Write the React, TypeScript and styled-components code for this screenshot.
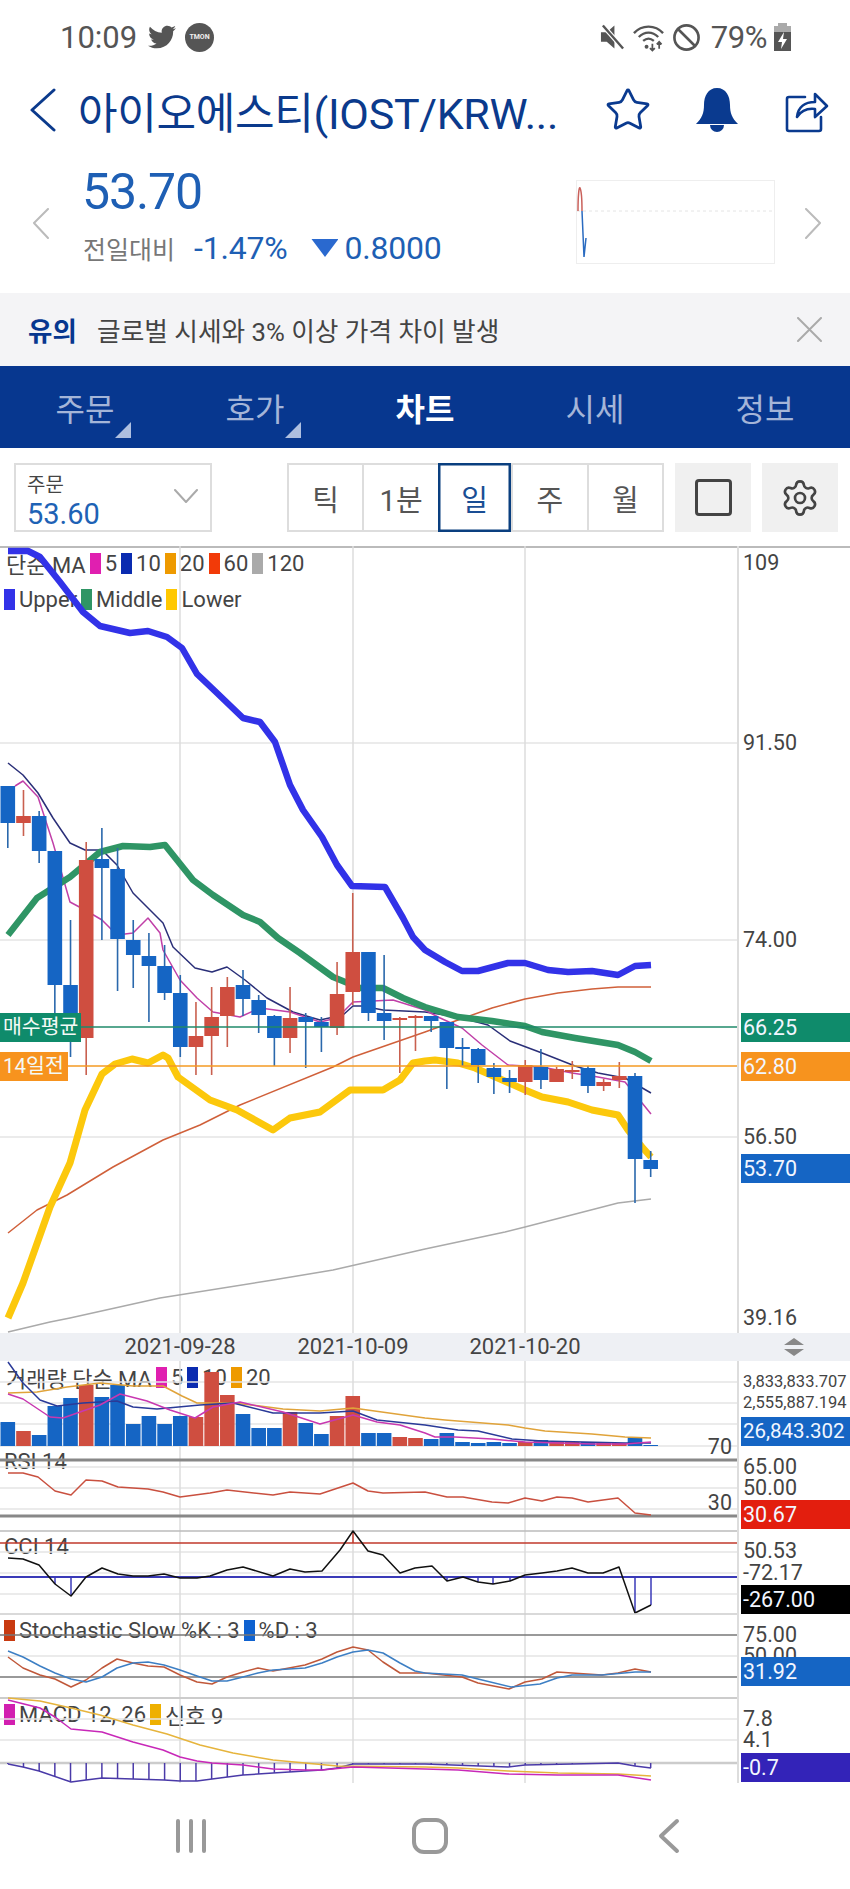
import React from "react";
import styled, { createGlobalStyle } from "styled-components";
import { FaTwitter } from "react-icons/fa";
import { Ban, Settings, Star } from "lucide-react";

type Pt = [number, number];
type Candle = ["b" | "r", number, number, number, number];

const BLUE = "#1565c4";
const RED = "#cf4e40";
const NAVY = "#07378f";
const PLOT_W = 737;
const GRID_X = [180, 353, 525];

const GlobalStyle = createGlobalStyle`
    html, body {
        margin: 0;
        padding: 0;
        background: #fff;
    }
    body {
        font-family: Roboto, "Noto Sans CJK KR", sans-serif;
        color: #444;
    }
`;

const Page = styled.div`
    width: 850px;
    height: 1889px;
    overflow: hidden;
    background: #fff;
`;

/* ---------- status bar ---------- */
const StatusBar = styled.div`
    height: 74px;
    display: flex;
    align-items: center;
    padding: 0 59px 0 60px;
    color: #555;
`;
const Time = styled.div`
    font-size: 31px;
    width: 88px;
`;
const TmonBadge = styled.div`
    width: 29px;
    height: 29px;
    margin-left: 9px;
    border-radius: 50%;
    background: #555;
    color: #eee;
    font-size: 7px;
    font-weight: 700;
    display: flex;
    align-items: center;
    justify-content: center;
`;
const StatusRight = styled.div`
    margin-left: auto;
    display: flex;
    align-items: center;
    gap: 7px;
`;
const Battery = styled.div`
    font-size: 31px;
    letter-spacing: -0.4px;
    margin-left: 3px;
`;

/* ---------- title ---------- */
const Header = styled.div`
    height: 72px;
    display: flex;
    align-items: center;
    padding-left: 30px;
    color: ${NAVY};
`;
const Title = styled.div`
    width: 526px;
    margin-left: 22px;
    font-size: 43px;
    white-space: nowrap;
    color: #0b3a8c;
    letter-spacing: -0.3px;
`;
const HeaderIcons = styled.div`
    display: flex;
    align-items: center;
`;
const HeaderIcon = styled.div<{ $w: number; $ml: number }>`
    width: ${(p) => p.$w}px;
    margin-left: ${(p) => p.$ml}px;
    display: flex;
    align-items: center;
    justify-content: center;
`;

/* ---------- price ---------- */
const PriceRow = styled.div`
    height: 147px;
    box-sizing: border-box;
    display: flex;
    align-items: flex-start;
    padding: 21px 28px 0 32px;
`;
const SideChevron = styled.div`
    margin-top: 41px;
    width: 17px;
`;
const PriceInfo = styled.div`
    flex: 1;
    margin-left: 34px;
`;
const PriceValue = styled.div`
    font-size: 50px;
    line-height: 50px;
    color: #1e5fb4;
    letter-spacing: -1.1px;
    margin-left: -1px;
`;
const ChangeRow = styled.div`
    margin-top: 13px;
    height: 36px;
    display: flex;
    align-items: center;
`;
const ChangeLabel = styled.div`
    font-size: 25px;
    color: #777;
    width: 111px;
`;
const ChangeValue = styled.div`
    font-size: 32px;
    color: #1e5fb4;
    letter-spacing: -0.2px;
`;
const DownMark = styled.div`
    width: 27px;
    height: 18px;
    margin: 0 6px 0 24px;
    background: #2a69cf;
    clip-path: polygon(0 0, 100% 0, 50% 100%);
`;
const MiniChart = styled.div`
    width: 199px;
    height: 84px;
    margin: 13px 30px 0 0;
    border: 1px solid #eee;
    box-sizing: border-box;
`;

/* ---------- notice ---------- */
const Notice = styled.div`
    height: 73px;
    background: #f4f4f6;
    display: flex;
    align-items: center;
    padding: 0 28px;
`;
const NoticeTag = styled.div`
    color: ${NAVY};
    font-weight: 700;
    font-size: 26.5px;
    width: 69px;
`;
const NoticeText = styled.div`
    flex: 1;
    color: #444;
    font-size: 25.7px;
    white-space: nowrap;
`;

/* ---------- tabs ---------- */
const Tabs = styled.div`
    height: 82px;
    background: ${NAVY};
    display: grid;
    grid-template-columns: repeat(5, 1fr);
`;
const Tab = styled.div<{ $active?: boolean }>`
    position: relative;
    display: flex;
    align-items: center;
    justify-content: center;
    font-size: 32px;
    font-weight: ${(p) => (p.$active ? 700 : 400)};
    color: ${(p) => (p.$active ? "#fff" : "#a4b5d8")};
`;
const TabCorner = styled.div`
    position: absolute;
    left: 115px;
    bottom: 10px;
    width: 16px;
    height: 16px;
    background: #aebfe0;
    clip-path: polygon(100% 0, 100% 100%, 0 100%);
`;

/* ---------- toolbar ---------- */
const Toolbar = styled.div`
    height: 98px;
    box-sizing: border-box;
    padding: 15px 12px 14px 14px;
    display: flex;
`;
const PriceSelect = styled.div`
    width: 198px;
    box-sizing: border-box;
    border: 2px solid #ddd;
    padding: 7px 0 0 11px;
    position: relative;
`;
const SelectLabel = styled.div`
    font-size: 20px;
    line-height: 26px;
    color: #444;
`;
const SelectValue = styled.div`
    font-size: 29px;
    line-height: 32px;
    color: #1e62b5;
`;
const SelectCaret = styled.div`
    position: absolute;
    right: 12px;
    top: 24px;
    display: flex;
`;
const Periods = styled.div`
    width: 377px;
    margin-left: 75px;
    display: flex;
    box-sizing: border-box;
    border: 2px solid #ddd;
`;
const Period = styled.div<{ $active?: boolean }>`
    flex: 1;
    display: flex;
    align-items: center;
    justify-content: center;
    font-size: 29px;
    color: ${(p) => (p.$active ? "#1a4e94" : "#555")};
    border-right: 2px solid #ddd;
    margin: ${(p) => (p.$active ? "-2px 0 -2px -2px" : "0")};
    box-shadow: ${(p) => (p.$active ? "inset 0 0 0 2.5px #0a3f7f" : "none")};
    &:last-child {
        border-right: 0;
    }
`;
const ToolButton = styled.div<{ $ml: number }>`
    width: 76px;
    margin-left: ${(p) => p.$ml}px;
    background: #f0f0f0;
    display: flex;
    align-items: center;
    justify-content: center;
    color: #444;
`;
const SquareGlyph = styled.div`
    width: 37px;
    height: 37px;
    box-sizing: border-box;
    border: 3px solid #444;
    border-radius: 4px;
`;

/* ---------- chart panels ---------- */
const PanelRow = styled.div<{ $h: number; $topLine?: boolean }>`
    height: ${(p) => p.$h}px;
    display: grid;
    grid-template-columns: ${PLOT_W}px 1fr;
    box-shadow: ${(p) => (p.$topLine ? "inset 0 2px 0 #bbb" : "none")};
`;
const Plot = styled.div`
    position: relative;
`;
const PlotSvg = styled.svg`
    position: relative;
    z-index: 1;
    display: block;
    overflow: visible;
`;
const Axis = styled.div`
    position: relative;
    border-left: 2px solid #ddd;
`;
const AxisLabel = styled.div<{ $y: number; $size?: number; $right?: boolean }>`
    position: absolute;
    left: ${(p) => (p.$right ? "auto" : "4px")};
    right: ${(p) => (p.$right ? "5px" : "auto")};
    top: ${(p) => p.$y}px;
    transform: translateY(-50%);
    font-size: ${(p) => p.$size ?? 21.5}px;
    line-height: 1;
    color: #444;
    white-space: nowrap;
    z-index: 1;
`;
const ValueTag = styled.div<{ $y: number; $color: string; $size?: number }>`
    position: absolute;
    left: 2px;
    right: 0;
    top: ${(p) => p.$y}px;
    height: 29px;
    background: ${(p) => p.$color};
    color: #f2f6ff;
    font-size: ${(p) => p.$size ?? 21.5}px;
    line-height: 29px;
    padding-left: 2px;
    z-index: 2;
`;
const LineTag = styled.div<{ $y: number; $color: string; $w: number }>`
    position: absolute;
    left: 0;
    top: ${(p) => p.$y}px;
    width: ${(p) => p.$w}px;
    height: 29px;
    background: ${(p) => p.$color};
    color: #f4faf6;
    font-size: 20.5px;
    line-height: 29px;
    padding-left: 3px;
    box-sizing: border-box;
    white-space: nowrap;
    z-index: 2;
`;
const Legend = styled.div<{ $y: number; $x?: number }>`
    position: absolute;
    left: ${(p) => p.$x ?? 4}px;
    top: ${(p) => p.$y}px;
    height: 22px;
    display: flex;
    align-items: center;
    gap: 4px;
    font-size: 22px;
    color: #444;
    white-space: nowrap;
`;
const Swatch = styled.span<{ $color: string }>`
    width: 11px;
    height: 21px;
    background: ${(p) => p.$color};
`;
const DateBar = styled.div`
    position: relative;
    height: 28px;
    background: #eef0f4;
`;
const DateLabel = styled.div<{ $x: number }>`
    position: absolute;
    left: ${(p) => p.$x}px;
    top: 0;
    transform: translateX(-50%);
    font-size: 22px;
    line-height: 28px;
    color: #444;
`;
const SplitHandle = styled.svg`
    position: absolute;
    left: 781px;
    top: 4px;
`;

/* ---------- nav ---------- */
const NavBar = styled.div`
    height: 106px;
    display: grid;
    grid-template-columns: repeat(3, 239px);
    padding-left: 71px;
    align-items: center;
    justify-items: center;
`;

/* ---------- data ---------- */
const candles: Candle[] = [
    ["b", 786, 786, 823, 848], ["r", 790, 816, 823, 836], ["b", 811, 816, 851, 863], ["b", 851, 851, 985, 1013],
    ["b", 920, 985, 1030, 1057], ["r", 842, 860, 1038, 1075], ["b", 828, 859, 868, 940], ["b", 848, 869, 939, 991],
    ["b", 920, 940, 955, 988], ["b", 933, 956, 966, 1022], ["b", 945, 966, 993, 1000], ["b", 975, 993, 1047, 1057],
    ["r", 1002, 1036, 1047, 1075], ["r", 987, 1017, 1036, 1075], ["r", 977, 987, 1016, 1047], ["b", 970, 985, 999, 1016],
    ["b", 995, 1000, 1015, 1033], ["b", 1015, 1016, 1038, 1066], ["r", 987, 1018, 1038, 1053], ["b", 1013, 1017, 1022, 1068],
    ["b", 1017, 1022, 1027, 1052], ["r", 962, 994, 1028, 1035], ["r", 893, 952, 992, 1005], ["b", 952, 952, 1013, 1021],
    ["b", 955, 1013, 1021, 1040], ["r", 1017, 1018, 1020, 1073], ["r", 1015, 1016, 1018, 1051], ["b", 1016, 1016, 1021, 1032],
    ["b", 1022, 1022, 1048, 1089], ["b", 1038, 1047, 1049, 1066], ["b", 1048, 1049, 1065, 1083], ["b", 1063, 1068, 1077, 1094],
    ["b", 1070, 1078, 1082, 1093], ["r", 1060, 1065, 1082, 1095], ["b", 1049, 1067, 1080, 1089], ["r", 1067, 1069, 1082, 1082],
    ["r", 1061, 1070, 1072, 1079], ["b", 1066, 1068, 1086, 1093], ["r", 1079, 1082, 1086, 1091], ["r", 1062, 1076, 1080, 1088],
    ["b", 1073, 1076, 1159, 1203], ["b", 1151, 1160, 1169, 1177],
];
const volumeTops = [
    1422, 1431, 1435, 1406, 1398, 1385, 1397, 1385, 1424, 1416, 1424, 1416, 1417, 1372, 1395, 1414, 1428, 1428, 1412, 1423, 1434,
    1416, 1396, 1433, 1433, 1437, 1438, 1439, 1433, 1442, 1443, 1442, 1443, 1442, 1440, 1442, 1442, 1442, 1443, 1443, 1437, 1445,
];
const upper: Pt[] = [[8,551],[28,551],[40,557],[60,582],[83,612],[100,626],[130,633],[148,631],[167,637],[182,648],[197,674],[217,693],[243,718],[260,722],[275,742],[290,785],[303,810],[322,837],[337,865],[352,886],[385,887],[403,918],[413,937],[425,950],[445,962],[462,971],[478,971],[508,963],[525,963],[548,970],[568,972],[592,971],[618,975],[635,966],[651,965]];
const middle: Pt[] = [[8,935],[37,898],[70,877],[100,852],[123,846],[150,847],[165,845],[193,880],[213,895],[243,915],[260,922],[278,938],[300,953],[333,977],[360,988],[383,988],[403,998],[425,1007],[458,1017],[492,1021],[525,1026],[542,1032],[575,1038],[618,1045],[635,1052],[651,1061]];
const lower: Pt[] = [[8,1318],[23,1283],[50,1207],[70,1163],[85,1110],[102,1074],[115,1064],[132,1059],[148,1063],[163,1055],[168,1058],[178,1077],[210,1100],[237,1110],[273,1130],[290,1118],[320,1112],[350,1090],[383,1090],[400,1080],[413,1063],[425,1061],[435,1060],[458,1063],[475,1068],[525,1090],[542,1097],[568,1102],[592,1110],[618,1115],[628,1130],[642,1147],[651,1157]];
const ma60: Pt[] = [[8,1233],[37,1210],[67,1195],[113,1167],[163,1140],[200,1125],[240,1105],[333,1067],[353,1057],[425,1032],[458,1020],[492,1008],[525,999],[558,993],[592,989],[618,987],[651,987]];
const ma120: Pt[] = [[8,1332],[50,1322],[70,1318],[160,1298],[273,1280],[333,1270],[425,1249],[505,1232],[525,1227],[618,1203],[651,1199]];
const ma10: Pt[] = [[8,763],[23,775],[38,793],[53,818],[70,843],[85,850],[102,850],[117,865],[133,893],[163,923],[173,947],[195,968],[212,972],[227,967],[245,980],[267,998],[293,1012],[320,1020],[343,1015],[353,1006],[362,1006],[383,1010],[425,1012],[458,1017],[488,1025],[510,1041],[542,1053],[575,1066],[598,1073],[625,1078],[651,1093]];
const ma5: Pt[] = [[15,786],[23,781],[38,797],[53,843],[70,902],[85,910],[102,920],[117,935],[133,933],[148,918],[160,933],[163,950],[180,980],[197,998],[213,1012],[240,1017],[260,1008],[290,1012],[320,1022],[337,1018],[353,1002],[393,1000],[425,1010],[438,1017],[462,1028],[482,1045],[508,1065],[542,1067],[572,1073],[598,1077],[625,1082],[651,1114]];
const volMa20: Pt[] = [[8,1393],[37,1392],[67,1387],[100,1383],[133,1386],[163,1386],[182,1396],[197,1403],[233,1403],[260,1406],[283,1409],[320,1411],[353,1408],[425,1418],[445,1420],[508,1425],[525,1428],[545,1431],[592,1434],[625,1437],[651,1438]];
const volMa10: Pt[] = [[8,1362],[23,1383],[40,1400],[57,1406],[83,1403],[117,1401],[133,1407],[157,1409],[200,1405],[233,1403],[273,1413],[320,1413],[353,1411],[377,1420],[425,1425],[458,1430],[478,1431],[512,1439],[542,1441],[625,1443],[651,1443]];
const volMa5: Pt[] = [[8,1394],[23,1399],[50,1417],[63,1418],[100,1405],[120,1394],[147,1401],[170,1410],[195,1418],[213,1407],[240,1402],[283,1412],[320,1424],[353,1415],[377,1422],[400,1425],[425,1433],[435,1437],[455,1437],[492,1439],[525,1442],[592,1444],[625,1444],[651,1442]];
const rsi: Pt[] = [[8,1473],[23,1473],[38,1477],[55,1491],[71,1495],[86,1480],[102,1481],[118,1487],[148,1489],[163,1492],[180,1497],[210,1493],[227,1490],[273,1495],[290,1492],[320,1494],[353,1483],[368,1491],[383,1493],[425,1492],[447,1497],[463,1497],[492,1502],[508,1503],[525,1498],[542,1501],[557,1497],[572,1498],[588,1502],[618,1498],[635,1513],[651,1515]];
const cci: Pt[] = [[8,1558],[23,1559],[39,1565],[55,1584],[71,1596],[86,1577],[102,1568],[118,1574],[133,1576],[148,1576],[164,1574],[180,1578],[197,1578],[210,1576],[227,1570],[243,1567],[273,1576],[290,1569],[305,1572],[322,1571],[340,1550],[353,1531],[368,1551],[383,1555],[400,1573],[415,1568],[432,1566],[447,1581],[463,1577],[478,1582],[493,1584],[510,1581],[525,1575],[542,1573],[557,1571],[572,1568],[588,1573],[603,1573],[619,1567],[635,1613],[651,1605]];
const stochK: Pt[] = [[8,1657],[23,1668],[40,1675],[55,1679],[71,1687],[86,1680],[102,1668],[117,1659],[133,1663],[148,1666],[164,1667],[180,1675],[197,1682],[212,1684],[227,1677],[243,1672],[258,1668],[273,1671],[305,1665],[322,1659],[337,1652],[353,1647],[368,1650],[383,1662],[400,1673],[425,1673],[462,1677],[478,1683],[509,1689],[525,1682],[542,1679],[557,1672],[572,1673],[602,1675],[618,1673],[635,1669],[651,1672]];
const stochD: Pt[] = [[8,1651],[23,1657],[40,1666],[55,1673],[71,1679],[86,1682],[102,1677],[117,1668],[133,1663],[148,1662],[164,1665],[180,1670],[197,1676],[212,1681],[227,1681],[243,1677],[258,1673],[273,1670],[305,1668],[322,1663],[337,1657],[353,1652],[368,1650],[383,1653],[400,1663],[415,1671],[425,1673],[462,1675],[478,1679],[511,1687],[540,1684],[557,1678],[572,1675],[602,1675],[635,1672],[651,1672]];
const macd: Pt[] = [[8,1700],[40,1708],[55,1717],[71,1729],[102,1732],[133,1742],[163,1750],[180,1757],[197,1761],[212,1763],[243,1765],[273,1769],[305,1770],[322,1770],[353,1767],[425,1769],[458,1770],[508,1774],[558,1775],[618,1775],[651,1780]];
const signal: Pt[] = [[8,1698],[40,1701],[71,1708],[100,1715],[133,1725],[167,1734],[200,1745],[233,1753],[273,1760],[305,1763],[337,1766],[425,1767],[458,1768],[508,1771],[558,1773],[618,1774],[651,1776]];
const macdOsc: Pt[] = [[8,1764],[23,1767],[39,1771],[71,1782],[86,1780],[102,1778],[133,1779],[164,1780],[180,1781],[197,1781],[212,1779],[243,1775],[273,1773],[305,1771],[322,1770],[337,1768],[353,1764],[425,1764],[508,1767],[525,1765],[572,1764],[618,1763],[635,1766],[651,1768]];

const slotX = (i: number) => 7.8 + 15.68 * i;
const pointsOf = (pts: Pt[]) => pts.map((p) => p.join(",")).join(" ");
const yAt = (pts: Pt[], x: number) => {
    for (let i = 1; i < pts.length; i++) {
        if (x <= pts[i][0]) {
            const [x0, y0] = pts[i - 1];
            const [x1, y1] = pts[i];
            return y0 + ((y1 - y0) * (x - x0)) / (x1 - x0);
        }
    }
    return pts[pts.length - 1][1];
};

const Line = ({ pts, color, w = 1.5 }: { pts: Pt[]; color: string; w?: number }) => (
    <polyline points={pointsOf(pts)} fill="none" stroke={color} strokeWidth={w} strokeLinejoin="round" />
);

const Grid = ({ ys, top, h, color = "#e4e4e4" }: { ys: number[]; top: number; h: number; color?: string }) => (
    <>
        {ys.map((y) => (
            <line key={y} x1={0} x2={PLOT_W} y1={y} y2={y} stroke={color} strokeWidth={1.5} />
        ))}
        {GRID_X.map((x) => (
            <line key={x} x1={x} x2={x} y1={top} y2={top + h} stroke="#dcdcdc" strokeWidth={1.5} />
        ))}
    </>
);

type PanelProps = {
    top: number;
    h: number;
    legend?: React.ReactNode;
    axis?: React.ReactNode;
    overlay?: React.ReactNode;
    topLine?: boolean;
    children: React.ReactNode;
};
const ChartPanel = ({ top, h, legend, axis, overlay, topLine, children }: PanelProps) => (
    <PanelRow $h={h} $topLine={topLine}>
        <Plot>
            {legend}
            <PlotSvg width={PLOT_W} height={h} viewBox={`0 ${top} ${PLOT_W} ${h}`}>
                {children}
            </PlotSvg>
            {overlay}
        </Plot>
        <Axis>{axis}</Axis>
    </PanelRow>
);

const Chevron = ({ d, w, h, color, sw = 2 }: { d: string; w: number; h: number; color: string; sw?: number }) => (
    <svg width={w} height={h} viewBox={`0 0 ${w} ${h}`}>
        <path d={d} fill="none" stroke={color} strokeWidth={sw} strokeLinecap="round" strokeLinejoin="round" />
    </svg>
);

const MAIN_TOP = 546;
const VOL_TOP = 1361;
const RSI_TOP = 1446;
const CCI_TOP = 1531;
const STO_TOP = 1614;
const MACD_TOP = 1698;

const App = () => {
    return (
        <Page>
            <GlobalStyle />
            <StatusBar>
                <Time>10:09</Time>
                <FaTwitter size={28} color="#555" />
                <TmonBadge>TMON</TmonBadge>
                <StatusRight>
                    <svg width={25} height={28} viewBox="0 0 26 28">
                        <path d="M1 9h6l8-7v24l-8-7H1z" fill="#555" />
                        <path d="M3 2l21 24" stroke="#fff" strokeWidth={5} />
                        <path d="M3 2l21 24" stroke="#555" strokeWidth={2.5} />
                    </svg>
                    <svg width={33} height={30} viewBox="0 0 34 30">
                        <path d="M2 11C10 2 24 2 32 11M7 15c6-6 14-6 20 0M11.500 19c3.500-3 7.500-3 11 0" fill="none" stroke="#555" strokeWidth={2.4} />
                        <circle cx={15} cy={25} r={2} fill="#555" />
                        <path d="M21 22v7M28 20v7M25.500 22.500L28 20l2.500 2.500M18.500 26.500L21 29l2.500-2.500" fill="none" stroke="#555" strokeWidth={1.8} />
                    </svg>
                    <Ban size={29} color="#555" strokeWidth={2.2} />
                    <Battery>79%</Battery>
                    <svg width={17} height={28} viewBox="0 0 17 28">
                        <rect x={4} y={0} width={9} height={4} fill="#aaa" />
                        <rect x={0} y={3} width={17} height={8} fill="#aaa" />
                        <rect x={0} y={9} width={17} height={19} fill="#555" />
                        <path d="M10 9l-6 10h4l-1 7 6-10H9z" fill="#fff" />
                    </svg>
                </StatusRight>
            </StatusBar>

            <Header>
                <Chevron d="M24 2L2 22l22 20" w={26} h={44} color="#0b3a8c" sw={3} />
                <Title>아이오에스티(IOST/KRW...</Title>
                <HeaderIcons>
                    <HeaderIcon $w={48} $ml={0}>
                        <Star size={56} strokeWidth={1.4} color="#0a3a8f" />
                    </HeaderIcon>
                    <HeaderIcon $w={44} $ml={43}>
                        <svg width={44} height={46} viewBox="0 0 44 46">
                            <path d="M22 1c9 0 13 8 13 17 0 8 2 13 8 19H1c6-6 8-11 8-19C9 9 13 1 22 1z" fill="#0a3a8f" />
                            <path d="M15 38h14a7 7 0 0 1-14 0z" fill="#0a3a8f" />
                        </svg>
                    </HeaderIcon>
                    <HeaderIcon $w={44} $ml={46}>
                        <svg width={44} height={46} viewBox="0 0 44 46" fill="none" stroke="#0a3a8f" strokeWidth={2.6} strokeLinejoin="round" strokeLinecap="round">
                            <path d="M20 10H4a2 2 0 0 0-2 2v30a2 2 0 0 0 2 2h30a2 2 0 0 0 2-2V30" />
                            <path d="M12 30c1-10 8-15 18-15V7l12 12-12 11v-8c-8-1-14 2-18 8z" />
                        </svg>
                    </HeaderIcon>
                </HeaderIcons>
            </Header>

            <PriceRow>
                <SideChevron>
                    <Chevron d="M16 1L2 15l14 15" w={17} h={31} color="#bbb" />
                </SideChevron>
                <PriceInfo>
                    <PriceValue>53.70</PriceValue>
                    <ChangeRow>
                        <ChangeLabel>전일대비</ChangeLabel>
                        <ChangeValue>-1.47%</ChangeValue>
                        <DownMark />
                        <ChangeValue>0.8000</ChangeValue>
                    </ChangeRow>
                </PriceInfo>
                <MiniChart>
                    <svg width={197} height={82} viewBox="0 0 197 82">
                        <line x1={0} x2={197} y1={30} y2={30} stroke="#e4e4e4" strokeDasharray="3 3" />
                        <path d="M1 30C1 15 2 5 3 7s2 10 2 23" fill="none" stroke="#c9605a" strokeWidth={1.5} />
                        <path d="M5 30L7 76l2-19" fill="none" stroke="#2a6bc0" strokeWidth={1.5} />
                    </svg>
                </MiniChart>
                <SideChevron>
                    <Chevron d="M1 1l14 14L1 30" w={17} h={31} color="#bbb" />
                </SideChevron>
            </PriceRow>

            <Notice>
                <NoticeTag>유의</NoticeTag>
                <NoticeText>글로벌 시세와 3% 이상 가격 차이 발생</NoticeText>
                <Chevron d="M1 1l23 23M24 1L1 24" w={25} h={25} color="#aaa" />
            </Notice>

            <Tabs>
                <Tab>
                    주문
                    <TabCorner />
                </Tab>
                <Tab>
                    호가
                    <TabCorner />
                </Tab>
                <Tab $active>차트</Tab>
                <Tab>시세</Tab>
                <Tab>정보</Tab>
            </Tabs>

            <Toolbar>
                <PriceSelect>
                    <SelectLabel>주문</SelectLabel>
                    <SelectValue>53.60</SelectValue>
                    <SelectCaret>
                        <Chevron d="M1 1l11 12L23 1" w={24} h={14} color="#aaa" />
                    </SelectCaret>
                </PriceSelect>
                <Periods>
                    <Period>틱</Period>
                    <Period>1분</Period>
                    <Period $active>일</Period>
                    <Period>주</Period>
                    <Period>월</Period>
                </Periods>
                <ToolButton $ml={11}>
                    <SquareGlyph />
                </ToolButton>
                <ToolButton $ml={11}>
                    <Settings size={40} strokeWidth={1.6} />
                </ToolButton>
            </Toolbar>

            <ChartPanel
                top={MAIN_TOP}
                h={787}
                topLine
                legend={
                    <>
                        <Legend $y={563 - MAIN_TOP - 11} $x={6}>
                            단순 MA
                            <Swatch $color="#e01fb0" />5
                            <Swatch $color="#0a2bb0" />10
                            <Swatch $color="#ee9a00" />20
                            <Swatch $color="#f23a08" />60
                            <Swatch $color="#aaa" />120
                        </Legend>
                        <Legend $y={599 - MAIN_TOP - 11}>
                            <Swatch $color="#3232e8" />Upper
                            <Swatch $color="#2f9565" />Middle
                            <Swatch $color="#ffc800" />Lower
                        </Legend>
                    </>
                }
                overlay={
                    <>
                        <LineTag $y={1013 - MAIN_TOP} $color="#0f8b6b" $w={81}>매수평균</LineTag>
                        <LineTag $y={1052 - MAIN_TOP} $color="#f7931e" $w={68}>14일전</LineTag>
                    </>
                }
                axis={
                    <>
                        <AxisLabel $y={563 - MAIN_TOP}>109</AxisLabel>
                        <AxisLabel $y={743 - MAIN_TOP}>91.50</AxisLabel>
                        <AxisLabel $y={940 - MAIN_TOP}>74.00</AxisLabel>
                        <AxisLabel $y={1137 - MAIN_TOP}>56.50</AxisLabel>
                        <AxisLabel $y={1318 - MAIN_TOP}>39.16</AxisLabel>
                        <ValueTag $y={1013 - MAIN_TOP} $color="#0f8b6b">66.25</ValueTag>
                        <ValueTag $y={1052 - MAIN_TOP} $color="#f7931e">62.80</ValueTag>
                        <ValueTag $y={1154 - MAIN_TOP} $color={BLUE}>53.70</ValueTag>
                    </>
                }
            >
                <Grid ys={[743, 940, 1137]} top={MAIN_TOP} h={787} />
                <Line pts={ma120} color="#aaa" />
                <Line pts={ma60} color="#d0603a" />
                <Line pts={ma10} color="#2a2f78" />
                <Line pts={ma5} color="#c040a8" />
                <Line pts={upper} color="#3232e8" w={6.5} />
                <Line pts={middle} color="#2f9565" w={6.5} />
                <Line pts={lower} color="#fcc80c" w={7} />
                {candles.map(([c, wt, bt, bb, wb], i) => {
                    const x = slotX(i);
                    const fill = c === "b" ? BLUE : RED;
                    return (
                        <g key={i}>
                            <line x1={x} x2={x} y1={wt} y2={wb} stroke={c === "b" ? "#2a68ac" : "#c9604f"} strokeWidth={1.6} />
                            <rect x={x - 7.3} y={bt} width={14.6} height={bb - bt} fill={fill} />
                        </g>
                    );
                })}
                <line x1={0} x2={PLOT_W} y1={1027} y2={1027} stroke="#1f8a6a" strokeWidth={1.5} />
                <line x1={0} x2={PLOT_W} y1={1066} y2={1066} stroke="#f59a22" strokeWidth={1.5} />
            </ChartPanel>

            <DateBar>
                <DateLabel $x={180}>2021-09-28</DateLabel>
                <DateLabel $x={353}>2021-10-09</DateLabel>
                <DateLabel $x={525}>2021-10-20</DateLabel>
                <SplitHandle width={26} height={20} viewBox="0 0 26 20">
                    <path d="M3 8L13 1l10 7zM3 12l10 7 10-7z" fill="#888" />
                </SplitHandle>
            </DateBar>

            <ChartPanel
                top={VOL_TOP}
                h={85}
                legend={
                    <Legend $y={1377 - VOL_TOP - 11} $x={6}>
                        거래량 단순 MA
                        <Swatch $color="#e01fb0" />5
                        <Swatch $color="#0a2bb0" />10
                        <Swatch $color="#ee9a00" />20
                    </Legend>
                }
                axis={
                    <>
                        <AxisLabel $y={1382 - VOL_TOP} $size={16.5}>3,833,833.707</AxisLabel>
                        <AxisLabel $y={1403 - VOL_TOP} $size={16.5}>2,555,887.194</AxisLabel>
                        <ValueTag $y={1417 - VOL_TOP} $color={BLUE} $size={20.5}>26,843.302</ValueTag>
                    </>
                }
            >
                <Grid ys={[1382, 1403, 1424, 1446]} top={VOL_TOP} h={85} />
                {volumeTops.map((t, i) => (
                    <rect key={i} x={slotX(i) - 7.3} y={t} width={14.6} height={1446 - t} fill={candles[i][0] === "b" ? BLUE : RED} />
                ))}
                <Line pts={volMa20} color="#e0a33a" />
                <Line pts={volMa10} color="#2a3a98" />
                <Line pts={volMa5} color="#c838b0" />
            </ChartPanel>

            <ChartPanel
                top={RSI_TOP}
                h={85}
                legend={<Legend $y={1461 - RSI_TOP - 11}>RSI 14</Legend>}
                overlay={
                    <>
                        <AxisLabel $y={1447 - RSI_TOP} $right>70</AxisLabel>
                        <AxisLabel $y={1503 - RSI_TOP} $right>30</AxisLabel>
                    </>
                }
                axis={
                    <>
                        <AxisLabel $y={1467 - RSI_TOP}>65.00</AxisLabel>
                        <AxisLabel $y={1488 - RSI_TOP}>50.00</AxisLabel>
                        <ValueTag $y={1500 - RSI_TOP} $color="#e31e0e">30.67</ValueTag>
                    </>
                }
            >
                <Grid ys={[1467, 1488, 1509]} top={RSI_TOP} h={85} />
                <line x1={0} x2={PLOT_W} y1={1460} y2={1460} stroke="#888" strokeWidth={3} />
                <line x1={0} x2={PLOT_W} y1={1516} y2={1516} stroke="#888" strokeWidth={3} />
                <Line pts={rsi} color="#c9503f" />
            </ChartPanel>

            <ChartPanel
                top={CCI_TOP}
                h={83}
                legend={<Legend $y={1546 - CCI_TOP - 11}>CCI 14</Legend>}
                axis={
                    <>
                        <AxisLabel $y={1551 - CCI_TOP}>50.53</AxisLabel>
                        <AxisLabel $y={1573 - CCI_TOP}>-72.17</AxisLabel>
                        <ValueTag $y={1585 - CCI_TOP} $color="#000">-267.00</ValueTag>
                    </>
                }
            >
                <Grid ys={[1552, 1573, 1594]} top={CCI_TOP} h={83} />
                <line x1={0} x2={PLOT_W} y1={1531} y2={1531} stroke="#bbb" strokeWidth={1.5} />
                <line x1={0} x2={PLOT_W} y1={1543} y2={1543} stroke="#c0392b" strokeWidth={1.5} />
                <line x1={0} x2={PLOT_W} y1={1577} y2={1577} stroke="#3a3ab8" strokeWidth={2} />
                <line x1={353} x2={353} y1={1533} y2={1543} stroke="#c0392b" strokeWidth={1.5} />
                {[55, 71, 447, 478, 493, 510, 635, 651].map((x) => (
                    <line key={x} x1={x} x2={x} y1={1577} y2={yAt(cci, x)} stroke="#3a3ab8" strokeWidth={1.5} />
                ))}
                <Line pts={cci} color="#111" />
            </ChartPanel>

            <ChartPanel
                top={STO_TOP}
                h={84}
                legend={
                    <Legend $y={1630 - STO_TOP - 11}>
                        <Swatch $color="#c83a10" />Stochastic Slow %K : 3
                        <Swatch $color="#0f62d0" />%D : 3
                    </Legend>
                }
                axis={
                    <>
                        <AxisLabel $y={1635 - STO_TOP}>75.00</AxisLabel>
                        <AxisLabel $y={1656 - STO_TOP}>50.00</AxisLabel>
                        <ValueTag $y={1657 - STO_TOP} $color={BLUE}>31.92</ValueTag>
                    </>
                }
            >
                <Grid ys={[1656]} top={STO_TOP} h={84} />
                <line x1={0} x2={PLOT_W} y1={1614} y2={1614} stroke="#ccc" strokeWidth={1.5} />
                <line x1={0} x2={PLOT_W} y1={1635} y2={1635} stroke="#777" strokeWidth={1.5} />
                <line x1={0} x2={PLOT_W} y1={1677} y2={1677} stroke="#777" strokeWidth={1.5} />
                <Line pts={stochK} color="#c0583a" />
                <Line pts={stochD} color="#3d7fc4" />
            </ChartPanel>

            <ChartPanel
                top={MACD_TOP}
                h={85}
                legend={
                    <Legend $y={1714 - MACD_TOP - 11}>
                        <Swatch $color="#d21fb0" />MACD 12, 26
                        <Swatch $color="#eeb000" />신호 9
                    </Legend>
                }
                axis={
                    <>
                        <AxisLabel $y={1719 - MACD_TOP}>7.8</AxisLabel>
                        <AxisLabel $y={1740 - MACD_TOP}>4.1</AxisLabel>
                        <ValueTag $y={1753 - MACD_TOP} $color="#3323b8">-0.7</ValueTag>
                    </>
                }
            >
                <Grid ys={[1719, 1740]} top={MACD_TOP} h={85} />
                <line x1={0} x2={PLOT_W} y1={1698} y2={1698} stroke="#ccc" strokeWidth={2} />
                <line x1={0} x2={PLOT_W} y1={1763} y2={1763} stroke="#ccc" strokeWidth={2.5} />
                {candles.map((_, i) => (
                    <line key={i} x1={slotX(i)} x2={slotX(i)} y1={1763} y2={yAt(macdOsc, slotX(i))} stroke="#4a3aa8" strokeWidth={1.5} />
                ))}
                <Line pts={macdOsc} color="#4a3aa8" />
                <Line pts={signal} color="#e6b43c" />
                <Line pts={macd} color="#c828b8" />
            </ChartPanel>

            <NavBar>
                <svg width={32} height={34} viewBox="0 0 32 34">
                    <path d="M3 2v30M16 2v30M29 2v30" stroke="#999" strokeWidth={4} strokeLinecap="round" />
                </svg>
                <svg width={36} height={36} viewBox="0 0 36 36">
                    <rect x={2} y={2} width={32} height={32} rx={10} fill="none" stroke="#999" strokeWidth={4} />
                </svg>
                <svg width={22} height={36} viewBox="0 0 22 36">
                    <path d="M19 3L3 18l16 15" fill="none" stroke="#999" strokeWidth={4} strokeLinecap="round" strokeLinejoin="round" />
                </svg>
            </NavBar>
        </Page>
    );
};

export default App;
